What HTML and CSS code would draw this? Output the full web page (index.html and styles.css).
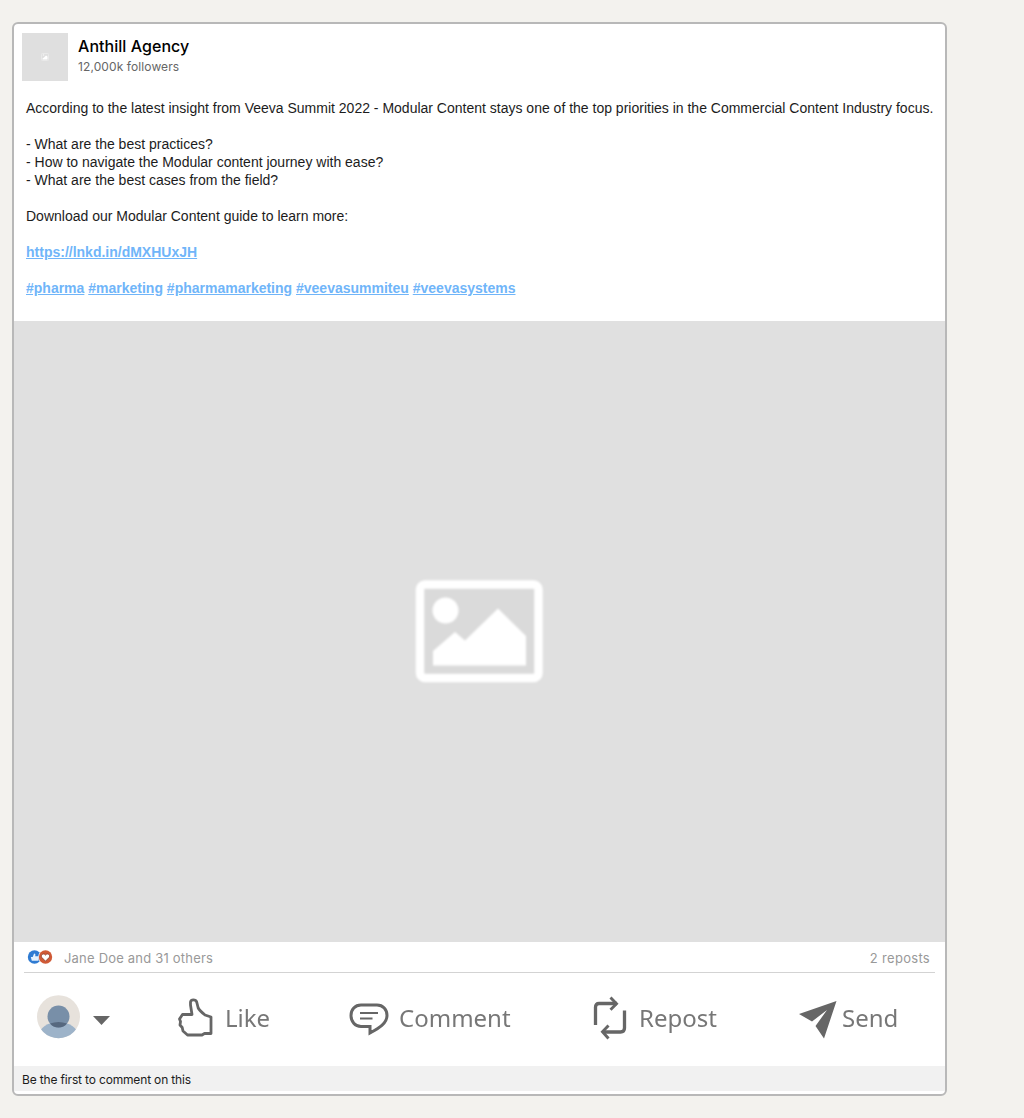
FILE: index.html
```html
<!DOCTYPE html>
<html lang="en">
<head>
<meta charset="utf-8">
<title>Anthill Agency post</title>
<link rel="stylesheet" href="styles.css">
</head>
<body>
<article class="card">
  <header class="header">
    <div class="logo">
      <svg width="8" height="8" viewBox="0 0 8 8"><rect x=".5" y=".5" width="7" height="7" rx="1" fill="none" stroke="#e9e9e9"/><path d="M1.500 6.500V5.500L3 4.500l2-2 1.500 1v3z" fill="#fff"/><circle cx="2.500" cy="2" r=".8" fill="#f6f6f6"/></svg>
    </div>
    <div>
      <div class="name">Anthill Agency</div>
      <div class="followers">12,000k followers</div>
    </div>
  </header>
  <div class="body">
    <p>According to the latest insight from Veeva Summit 2022 - Modular Content stays one of the top priorities in the Commercial Content Industry focus.</p>
    <p>- What are the best practices?<br>- How to navigate the Modular content journey with ease?<br>- What are the best cases from the field?</p>
    <p>Download our Modular Content guide to learn more:</p>
    <p><a href="#">https://lnkd.in/dMXHUxJH</a></p>
    <p><a href="#">#pharma</a> <a href="#">#marketing</a> <a href="#">#pharmamarketing</a> <a href="#">#veevasummiteu</a> <a href="#">#veevasystems</a></p>
  </div>
  <div class="media">
    <svg class="placeholder" width="140" height="114" viewBox="0 0 140 114">
      <rect x="10" y="9.500" width="118.500" height="93.500" rx="5" fill="#dadada" stroke="#fff" stroke-width="8.500"/>
      <circle cx="35.500" cy="35.500" r="13" fill="#fff"/>
      <path d="M23 90.500V76L45 57l10 8.500L88 33.500l28 27.500v29.500z" fill="#fff"/>
    </svg>
  </div>
  <div class="stats">
    <svg class="reactions" width="26" height="14" viewBox="0 0 26 14">
      <circle cx="7.500" cy="7" r="6.700" fill="#2f7bd2"/>
      <path d="M3.800 7h1.900L7.100 3.500l1.200.5v2.200h3.200v4.500H4.800z" fill="#e4f1fd"/>
      <circle cx="18.500" cy="7" r="7.300" fill="#fff"/>
      <circle cx="18.500" cy="7" r="6.700" fill="#d05a36"/>
      <path d="M18.500 11.200 14.700 7.300c-1.500-2.300 1.900-4.800 3.800-2.200 1.900-2.600 5.300-.1 3.800 2.200z" fill="#fff" stroke="#8a3a2a" stroke-width=".8"/>
    </svg>
    <span class="people">Jane Doe and 31 others</span>
    <span class="reposts">2 reposts</span>
  </div>
  <div class="actions">
    <div class="action">
      <svg width="76" height="46" viewBox="0 0 76 46">
        <clipPath id="face"><circle cx="21.500" cy="21.700" r="21.500"/></clipPath>
        <g clip-path="url(#face)"><path d="M0 0h44v46H0z" fill="#e7e2dc"/><ellipse cx="21.500" cy="40.500" rx="19.500" ry="13.500" fill="#9db3c9"/><circle cx="21.500" cy="21.500" r="11" fill="#788fa8"/><path d="M13 28.500q8.500-3 17 0-3 4-8.500 4t-8.500-4" fill="#56687f"/></g>
        <path d="M56 21h17l-8.500 9z" fill="#666"/>
      </svg>
    </div>
    <div class="action like">
      <svg width="36" height="40" viewBox="0 0 36 40">
        <path d="M14 16.500 12.500 7V4q.5-2.200 2.800-2.200Q18 1.800 18.700 4l1.500 6q1.300 2.500 6.800 7l6 2v16.500h-6.500L24 37H9.500L5 33l-.8-3.500L2 27l.5-3.500L1.500 21l3-4.500z" fill="none" stroke="#666" stroke-width="2.800" stroke-linejoin="round"/>
      </svg><span>Like</span>
    </div>
    <div class="action comment">
      <svg width="40" height="34" viewBox="0 0 40 34">
        <path d="M12 2h16c6 0 10 4.500 10 10.500 0 8-8 12.500-17 17.500v-6.500h-9C6 23.500 2 18.500 2 12.500S6 2 12 2z" fill="none" stroke="#666" stroke-width="3"/>
        <path d="M11 10h18M11 15.500h12.500" stroke="#666" stroke-width="1.800"/>
      </svg><span>Comment</span>
    </div>
    <div class="action repost">
      <svg width="34" height="44" viewBox="0 0 34 44">
        <path d="M2.500 29V11q0-3.500 3.500-3.500h18M31.500 14.500v17.500q0 4-4 4H10" fill="none" stroke="#666" stroke-width="3.300"/>
        <path d="M17.500 1.500 23.500 7.700l-6 6M15.500 29.500l-6 6.300 6 6.700" fill="none" stroke="#666" stroke-width="2.900"/>
      </svg><span>Repost</span>
    </div>
    <div class="action send">
      <svg width="38" height="38" viewBox="0 0 38 38"><path d="M0 13 37.500 0 25 37.500 16.500 25 28 9 13 20.500z" fill="#666"/></svg><span>Send</span>
    </div>
  </div>
  <footer class="footer">Be the first to comment on this</footer>
</article>
</body>
</html>
```
FILE: styles.css
```css
* { box-sizing: border-box; }
body { margin: 0; padding: 22px 12px; background: #f3f2ee; font-family: Inter, sans-serif; }
.card { width: 935px; height: 1074px; background: #fff; border: 2px solid #b8b8b8; border-radius: 6px; overflow: hidden; }
.header { display: flex; gap: 10px; height: 75px; padding: 9px 8px 0; }
.logo { display: flex; align-items: center; justify-content: center; width: 46px; height: 48px; background: #dfdfdf; }
.name { margin-top: 3px; font-size: 16px; font-weight: 500; line-height: 20px; letter-spacing: .04px; color: #000; }
.followers { margin-top: 3px; font-size: 12px; line-height: 16px; letter-spacing: .1px; color: #666; }
.body { height: 222px; padding: 0 12px; font: 14px/18px "Liberation Sans", Arial, sans-serif; color: #1c1c1c; white-space: nowrap; }
.body p { margin: 0 0 18px; }
.body a { color: #70b5f9; font-weight: 700; }
.media { display: flex; align-items: center; justify-content: center; height: 621px; background: #e0e0e0; }
.placeholder { filter: blur(1px); }
.stats { display: flex; align-items: center; height: 31px; margin: 0 10px; padding: 0 5px 0 3px; border-bottom: 1px solid #d3d3d3; font-size: 13px; letter-spacing: .3px; color: #999; }
.reactions { margin-right: 11px; }
.stats span { padding-top: 2px; }
.people { flex: 1; letter-spacing: .2px; }
.actions { display: grid; grid-template-columns: 141px 171px 244px 206px 1fr; height: 93px; padding: 0 0 4px 23px; align-items: center; font: 24px/36px "Noto Sans", "Open Sans", sans-serif; color: #777; filter: blur(.5px); }
.action { display: flex; align-items: center; }
.like { gap: 11px; }
.comment { gap: 10px; }
.comment svg { margin-top: 5px; }
.repost { gap: 12px; }
.send { gap: 5px; }
.send svg { margin-top: 5px; }
.footer { height: 25px; padding: 0 8px; background: #f1f1f1; font-size: 12px; line-height: 27px; letter-spacing: -.16px; color: #1c1c1c; }
```
